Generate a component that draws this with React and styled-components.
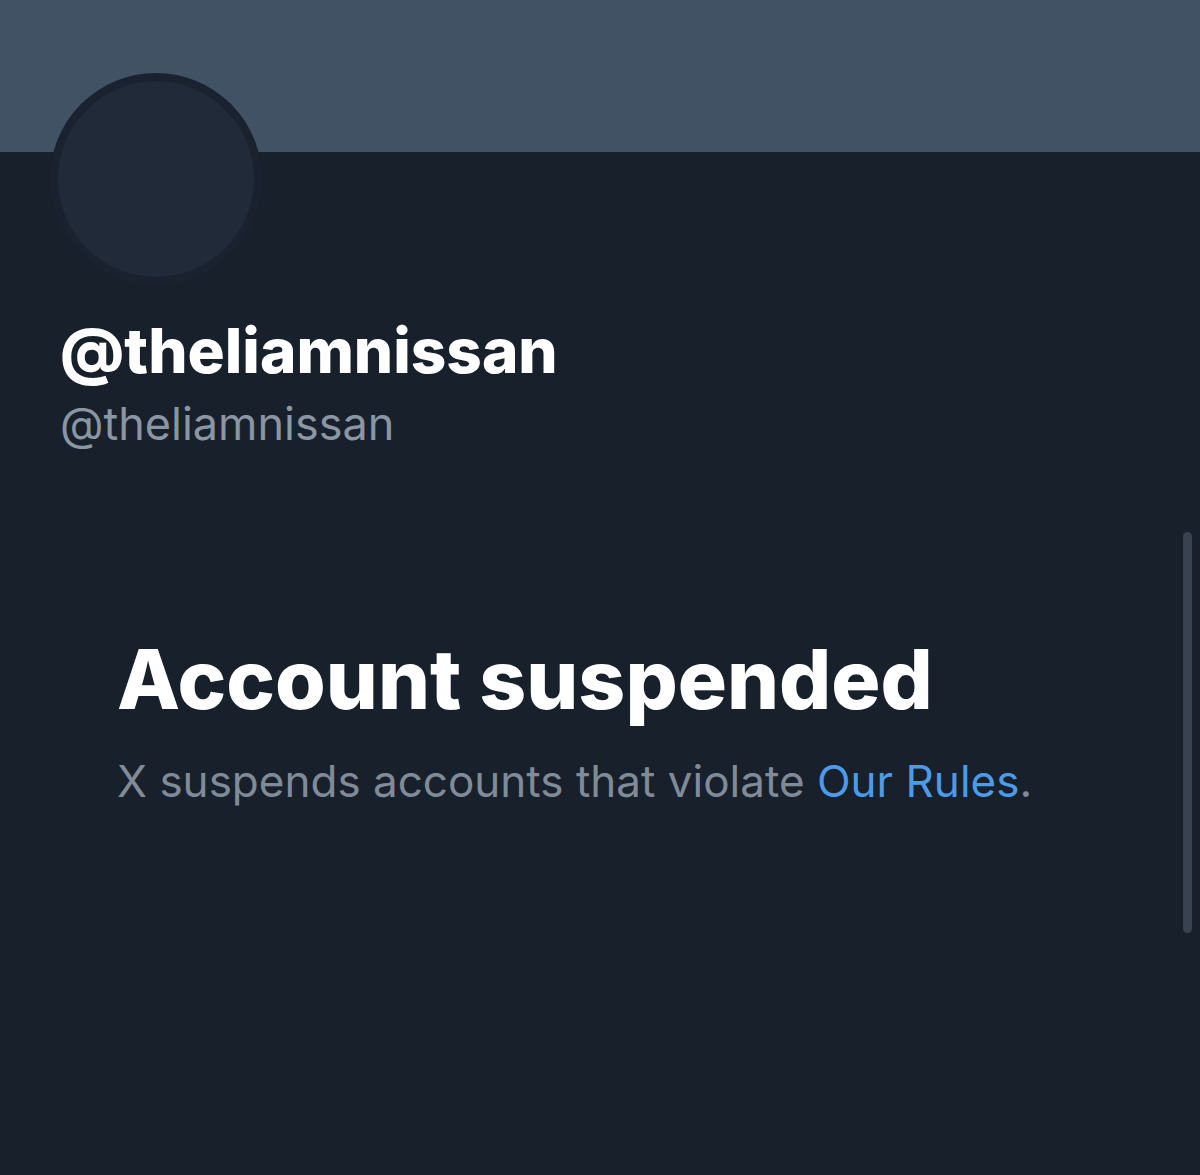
import React from "react";
import styled, { createGlobalStyle } from "styled-components";

const GlobalStyle = createGlobalStyle`
  html, body {
    margin: 0;
    padding: 0;
    background: #18202b;
  }
  body {
    font-family: Inter, "Noto Sans", "Liberation Sans", sans-serif;
  }
`;

const Page = styled.div`
  position: relative;
  width: 1200px;
  height: 1175px;
  overflow: hidden;
  background: #18202b;
`;

const Banner = styled.div`
  height: 152px;
  background: #425265;
`;

const Header = styled.div`
  padding-left: 60px;
`;

const Avatar = styled.div`
  width: 196px;
  height: 196px;
  margin-top: -79px;
  margin-left: -10px;
  border-radius: 50%;
  border: 8px solid #19222e;
  background: #202a38;
`;

const DisplayName = styled.h1`
  margin: 35px 0 0;
  font-size: 62px;
  font-weight: 800;
  color: #ffffff;
  line-height: 62px;
`;

const Handle = styled.div`
  margin-top: 15px;
  font-size: 45px;
  font-weight: 400;
  color: #8a96a3;
  line-height: 54px;
`;

const Notice = styled.section`
  padding: 181px 0 0 117px;
`;

const Title = styled.h2`
  margin: 0;
  font-size: 82px;
  font-weight: 800;
  color: #ffffff;
  line-height: 96px;
`;

const Body = styled.p`
  margin: 25px 0 0;
  font-size: 44px;
  color: #808b98;
  line-height: 56px;
`;

const Link = styled.a`
  color: #4b9be9;
  text-decoration: none;
`;

const ScrollThumb = styled.div`
  position: absolute;
  right: 8px;
  top: 532px;
  width: 9px;
  height: 401px;
  border-radius: 5px;
  background: #39424f;
`;

export default function App() {
  return (
    <Page>
      <GlobalStyle />
      <Banner />
      <Header>
        <Avatar />
        <DisplayName>@theliamnissan</DisplayName>
        <Handle>@theliamnissan</Handle>
      </Header>
      <Notice>
        <Title>Account suspended</Title>
        <Body>
          X suspends accounts that violate <Link href="#">Our Rules</Link>.
        </Body>
      </Notice>
      <ScrollThumb />
    </Page>
  );
}
